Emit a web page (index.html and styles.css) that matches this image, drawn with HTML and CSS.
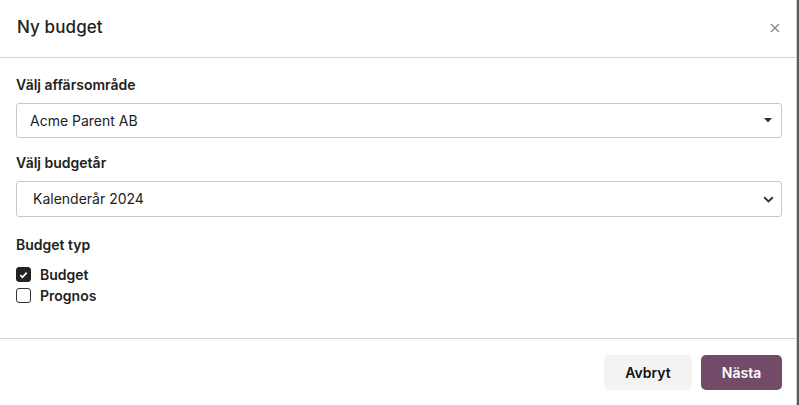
FILE: index.html
```html
<!DOCTYPE html>
<html lang="sv">
<head>
<meta charset="utf-8">
<title>Ny budget</title>
<link rel="stylesheet" href="styles.css">
</head>
<body>
<div class="modal">
  <header class="modal-header">
    <h1 class="modal-title">Ny budget</h1>
    <button class="close" aria-label="Stäng">
      <svg width="10" height="10" viewBox="0 0 10 10"><path d="M1 1L9 9M9 1L1 9" stroke="#8a8a8a" stroke-width="1.4" fill="none"/></svg>
    </button>
  </header>
  <main class="modal-body">
    <div class="field">
      <label class="field-label">Välj affärsområde</label>
      <div class="select select-a">
        <span class="select-text">Acme Parent AB</span>
        <svg class="caret" width="8" height="5" viewBox="0 0 8 5"><path d="M0 0H8L4 4.5Z" fill="#333"/></svg>
      </div>
    </div>
    <div class="field">
      <label class="field-label">Välj budgetår</label>
      <div class="select select-b">
        <span class="select-text">Kalenderår 2024</span>
        <svg class="chevron" width="11" height="7" viewBox="0 0 11 7"><path d="M1.2 1.2L5.5 5.4L9.8 1.2" stroke="#333" stroke-width="2" fill="none"/></svg>
      </div>
    </div>
    <div class="field">
      <label class="field-label">Budget typ</label>
      <div class="checks">
        <div class="check-row">
          <span class="box checked">
            <svg width="9" height="8" viewBox="0 0 9 8"><path d="M1.3 4.2L3.5 6.2L7.7 1.6" stroke="#fff" stroke-width="1.7" fill="none"/></svg>
          </span>
          <span class="check-label">Budget</span>
        </div>
        <div class="check-row">
          <span class="box"></span>
          <span class="check-label">Prognos</span>
        </div>
      </div>
    </div>
  </main>
  <footer class="modal-footer">
    <button class="btn btn-secondary">Avbryt</button>
    <button class="btn btn-primary">Nästa</button>
  </footer>
</div>
</body>
</html>
```

FILE: styles.css
```css
* { box-sizing: border-box; }
html, body { margin: 0; padding: 0; }
body {
  background: #5a5a5a;
  font-family: Inter, "Noto Sans", sans-serif;
  color: #1f1f1f;
  width: 799px;
  height: 405px;
  overflow: hidden;
}
.modal {
  width: 797px;
  height: 405px;
  background: #fff;
  border-right: 1px solid #d0d0d0;
  display: flex;
  flex-direction: column;
}
.modal-header {
  height: 58px;
  border-bottom: 1px solid #d4d4d4;
  display: flex;
  align-items: center;
  justify-content: space-between;
  padding: 0 15px 4px 17px;
}
.modal-title {
  margin: 0;
  font-size: 17px;
  font-weight: 500;
  color: #222;
  letter-spacing: 0.1px;
}
.close {
  border: 0;
  background: none;
  padding: 0;
  width: 12px;
  height: 12px;
  display: flex;
  align-items: center;
  justify-content: center;
  margin-top: 2px;
}
.modal-body {
  padding: 17px 14px 0 16px;
  height: 280px;
  display: flex;
  flex-direction: column;
}
.field { display: flex; flex-direction: column; }
.field + .field { margin-top: 15px; }
.field:last-child { margin-top: 18px; }
.field-label {
  font-size: 14px;
  font-weight: 600;
  line-height: 20px;
  color: #222;
  margin-bottom: 8px;
}
.select {
  height: 35px;
  border: 1px solid #c8c8c8;
  border-radius: 3px;
  display: flex;
  align-items: center;
  justify-content: space-between;
  font-size: 14px;
  color: #222;
}
.select-b { height: 36px; }
.select-a { padding: 0 9px 0 13px; }
.select-b { padding: 0 7px 0 16px; }
.select-text { line-height: 20px; }
.checks { display: flex; flex-direction: column; margin-top: 1px; }
.check-row {
  display: flex;
  align-items: center;
  height: 21px;
}
.box {
  width: 15px;
  height: 15px;
  border: 1.5px solid #333;
  border-radius: 3px;
  margin-right: 9px;
  display: flex;
  align-items: center;
  justify-content: center;
  background: #fff;
}
.box.checked { background: #222; border-color: #222; }
.check-label {
  font-size: 14px;
  font-weight: 600;
  color: #222;
}
.modal-footer {
  border-top: 1px solid #d4d4d4;
  padding: 16px 14px 0 16px;
  display: flex;
  justify-content: flex-end;
  gap: 9px;
  flex: 1;
  align-items: flex-start;
}
.btn {
  height: 35px;
  border: 0;
  border-radius: 5px;
  font-family: inherit;
  font-size: 14px;
  font-weight: 600;
  padding: 0;
}
.btn-secondary {
  width: 88px;
  background: #f3f3f3;
  color: #111;
}
.btn-primary {
  width: 81px;
  background: #714b67;
  color: #fff;
}
```
